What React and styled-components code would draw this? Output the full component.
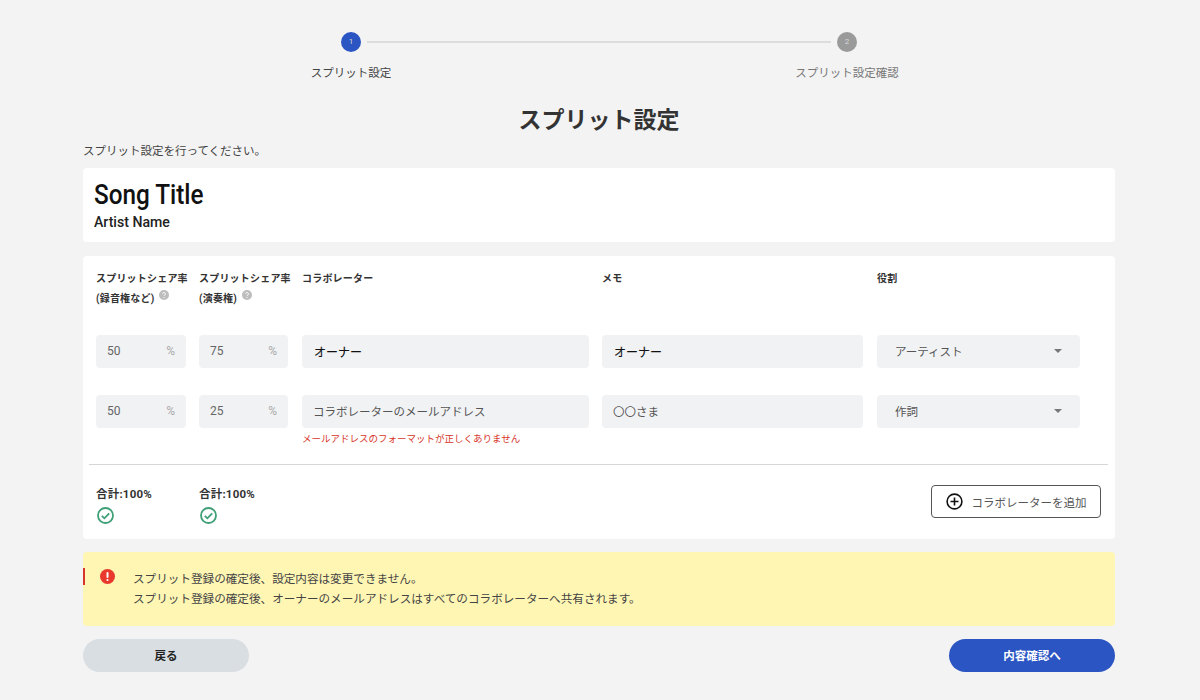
import React from "react";
import styled, { createGlobalStyle } from "styled-components";

const GlobalStyle = createGlobalStyle`
  html, body {
    margin: 0;
    padding: 0;
    background: #f3f3f3;
  }
  body {
    font-family: "Noto Sans CJK JP", "Noto Sans", sans-serif;
    color: #333;
  }
  * {
    box-sizing: border-box;
  }
`;

const latin = `Roboto, "Noto Sans CJK JP", sans-serif`;

const Page = styled.div`
  width: 1032px;
  height: 700px;
  margin-left: 83px;
  padding-top: 32px;
  overflow: hidden;
`;

// Stepper
const Track = styled.div`
  display: flex;
  justify-content: center;
  align-items: center;
  gap: 6px;
`;
const Dot = styled.div`
  width: 20px;
  height: 20px;
  border-radius: 50%;
  background: ${(p) => (p.$active ? "#2b55c3" : "#9a9a9a")};
  color: #d8d8d8;
  font: 8px/20px ${latin};
  text-align: center;
`;
const Line = styled.div`
  width: 464px;
  height: 2px;
  background: #dcdcdc;
`;
const StepLabels = styled.div`
  display: flex;
  justify-content: center;
  gap: 296px;
  margin-top: 11px;
`;
const StepLabel = styled.div`
  width: 200px;
  text-align: center;
  font-size: 11.5px;
  line-height: 18px;
  color: ${(p) => (p.$active ? "#444" : "#777")};
`;

const Title = styled.h1`
  margin: 20px 0 0;
  text-align: center;
  font-size: 23px;
  line-height: 34px;
  font-weight: 700;
  color: #333;
`;
const Lead = styled.p`
  margin: 6px 0 0;
  font-size: 11.5px;
  line-height: 18px;
  color: #444;
`;

// Cards
const Card = styled.section`
  background: #fff;
  border-radius: 4px;
`;
const SongCard = styled(Card)`
  height: 74px;
  margin-top: 9px;
  padding: 11px;
`;
const SongTitle = styled.div`
  font-family: ${latin};
  font-size: 27px;
  line-height: 32px;
  font-weight: 500;
  color: #111;
  transform-origin: left;
  transform: scaleX(0.9);
`;
const ArtistName = styled.div`
  font-family: ${latin};
  font-size: 15px;
  line-height: 22px;
  font-weight: 500;
  color: #222;
  transform-origin: left;
  transform: scaleX(0.94);
`;
const TableCard = styled(Card)`
  height: 283px;
  margin-top: 14px;
  padding: 13px 7px 0 6px;
`;
const Grid = styled.div`
  display: grid;
  grid-template-columns: 90px 90px 287px 262px 203px;
  column-gap: 13px;
  padding: 0 7px;
`;
const HeadCell = styled.div`
  height: 66px;
  font-family: ${latin};
  font-size: 10px;
  letter-spacing: 0.2px;
  line-height: 20px;
  font-weight: 700;
  color: #333;
  white-space: nowrap;
`;
const Cell = styled.div`
  height: ${(p) => (p.$last ? "69px" : "60px")};
`;
const Field = styled.div`
  display: flex;
  align-items: center;
  justify-content: space-between;
  height: 33px;
  width: ${(p) => p.$width || "100%"};
  padding: 0 ${(p) => p.$pad || "11px"} ${(p) => (p.$strong ? "0" : "1px")};
  background: #f1f2f4;
  border-radius: 4px;
  font-size: ${(p) => (p.$strong ? "12px" : "11.5px")};
  color: ${(p) => (p.$strong ? "#111" : "#555")};
  -webkit-text-stroke: ${(p) => (p.$strong ? "0.15px #111" : "0")};
`;
const Num = styled.span`
  font-family: ${latin};
  font-size: 12px;
  color: #666;
`;
const Percent = styled.span`
  font-family: ${latin};
  font-size: 12px;
  color: #aaa;
`;
const FieldError = styled.div`
  margin-top: 3px;
  font-size: 9.5px;
  line-height: 14px;
  color: #d8352a;
`;
const Caret = styled.span`
  width: 0;
  height: 0;
  border-left: 4.5px solid transparent;
  border-right: 4.5px solid transparent;
  border-top: 4.5px solid #777;
`;
const Divider = styled.hr`
  margin: 0;
  border: 0;
  height: 1px;
  background: #d6d6d6;
`;
const Totals = styled.div`
  display: flex;
  justify-content: space-between;
  padding: 20px 7px 0;
`;
const TotalGroup = styled.div`
  display: flex;
  gap: 13px;
  padding-top: 1px;
`;
const Total = styled.div`
  width: 90px;
  font-family: ${latin};
  font-size: 11.5px;
  letter-spacing: 0.2px;
  line-height: 16px;
  font-weight: 700;
  color: #333;
  svg {
    display: block;
    margin: 5px 0 0 1px;
  }
`;
const AddButton = styled.button`
  display: flex;
  align-items: center;
  justify-content: center;
  gap: 9px;
  width: 170px;
  height: 33px;
  background: #fff;
  border: 1px solid #555;
  border-radius: 4px;
  font: inherit;
  font-size: 11.5px;
  color: #555;
`;

// Alert
const Alert = styled.div`
  position: relative;
  display: flex;
  gap: 18px;
  height: 74px;
  margin-top: 13px;
  padding: 16px 17px 0;
  background: #fff6b4;
  border-radius: 4px;
  font-size: 11.6px;
  line-height: 20px;
  color: #444;
  &::before {
    content: "";
    position: absolute;
    left: 0;
    top: 16px;
    width: 2px;
    height: 17px;
    background: #d8352a;
  }
`;
const AlertMark = styled.svg`
  flex: none;
  margin-top: 1px;
`;
const Footer = styled.div`
  display: flex;
  justify-content: space-between;
  margin-top: 13px;
`;
const Pill = styled.button`
  width: 166px;
  height: 33px;
  padding: 0 0 2px;
  border: 0;
  border-radius: 17px;
  background: ${(p) => (p.$primary ? "#2b55c3" : "#d9dee3")};
  color: ${(p) => (p.$primary ? "#fff" : "#222")};
  font: inherit;
  font-size: 11.5px;
  font-weight: 700;
`;
const HelpIcon = styled.svg`
  margin-left: 5px;
  vertical-align: 2px;
`;

const Help = () => (
  <HelpIcon width="10" height="10" viewBox="0 0 10 10">
    <circle cx="5" cy="5" r="5" fill="#bdbdbd" />
    <path d="M3.6 3.9a1.4 1.4 0 1 1 2.2 1.1c-.5.3-.8.5-.8 1" fill="none" stroke="#fff" strokeWidth="1" />
    <circle cx="5" cy="7.6" r=".6" fill="#fff" />
  </HelpIcon>
);

const CheckIcon = () => (
  <svg width="17" height="17" viewBox="0 0 17 17" fill="none">
    <circle cx="8.5" cy="8.5" r="7.5" stroke="#3f9f77" strokeWidth="1.8" />
    <path d="M4.8 8.8l2.6 2.5 4.8-5" stroke="#3f9f77" strokeWidth="1.8" />
  </svg>
);

const PlusIcon = () => (
  <svg width="17" height="17" viewBox="0 0 17 17" fill="none">
    <circle cx="8.5" cy="8.5" r="7.4" stroke="#111" strokeWidth="1.6" />
    <path d="M8.5 4.5v8M4.5 8.5h8" stroke="#111" strokeWidth="1.6" />
  </svg>
);

const AlertIcon = () => (
  <AlertMark width="15" height="15" viewBox="0 0 15 15">
    <circle cx="7.5" cy="7.5" r="7.5" fill="#e8392c" />
    <rect x="6.5" y="3" width="2" height="6" rx="1" fill="#fff" />
    <circle cx="7.5" cy="11" r="1.1" fill="#fff" />
  </AlertMark>
);

const rows = [
  { rec: "50", perf: "75", name: "オーナー", strong: true, memo: "オーナー", role: "アーティスト" },
  {
    rec: "50",
    perf: "25",
    name: "コラボレーターのメールアドレス",
    memo: "〇〇さま",
    role: "作詞",
    error: "メールアドレスのフォーマットが正しくありません",
    last: true,
  },
];

const App = () => {
  return (
    <>
      <GlobalStyle />
      <Page>
        <Track>
          <Dot $active>1</Dot>
          <Line />
          <Dot>2</Dot>
        </Track>
        <StepLabels>
          <StepLabel $active>スプリット設定</StepLabel>
          <StepLabel>スプリット設定確認</StepLabel>
        </StepLabels>

        <Title>スプリット設定</Title>
        <Lead>スプリット設定を行ってください。</Lead>

        <SongCard>
          <SongTitle>Song Title</SongTitle>
          <ArtistName>Artist Name</ArtistName>
        </SongCard>

        <TableCard>
          <Grid>
            <HeadCell>
              スプリットシェア率
              <br />
              (録音権など)
              <Help />
            </HeadCell>
            <HeadCell>
              スプリットシェア率
              <br />
              (演奏権)
              <Help />
            </HeadCell>
            <HeadCell>コラボレーター</HeadCell>
            <HeadCell>メモ</HeadCell>
            <HeadCell>役割</HeadCell>
            {rows.map((row) => (
              <React.Fragment key={row.name}>
                <Cell $last={row.last}>
                  <Field>
                    <Num>{row.rec}</Num>
                    <Percent>%</Percent>
                  </Field>
                </Cell>
                <Cell $last={row.last}>
                  <Field $width="89px">
                    <Num>{row.perf}</Num>
                    <Percent>%</Percent>
                  </Field>
                </Cell>
                <Cell $last={row.last}>
                  <Field $strong={row.strong} $pad={row.strong ? "12px" : "11px"}>{row.name}</Field>
                  {row.error && <FieldError>{row.error}</FieldError>}
                </Cell>
                <Cell $last={row.last}>
                  <Field $strong={row.strong} $width="261px" $pad={row.strong ? "12px" : "11px"}>
                    {row.memo}
                  </Field>
                </Cell>
                <Cell $last={row.last}>
                  <Field $pad="18px">
                    {row.role}
                    <Caret />
                  </Field>
                </Cell>
              </React.Fragment>
            ))}
          </Grid>
          <Divider />
          <Totals>
            <TotalGroup>
              <Total>
                合計:100%
                <CheckIcon />
              </Total>
              <Total>
                合計:100%
                <CheckIcon />
              </Total>
            </TotalGroup>
            <AddButton>
              <PlusIcon />
              コラボレーターを追加
            </AddButton>
          </Totals>
        </TableCard>

        <Alert>
          <AlertIcon />
          <div>
            スプリット登録の確定後、設定内容は変更できません。
            <br />
            スプリット登録の確定後、オーナーのメールアドレスはすべてのコラボレーターへ共有されます。
          </div>
        </Alert>

        <Footer>
          <Pill>戻る</Pill>
          <Pill $primary>内容確認へ</Pill>
        </Footer>
      </Page>
    </>
  );
};

export default App;
